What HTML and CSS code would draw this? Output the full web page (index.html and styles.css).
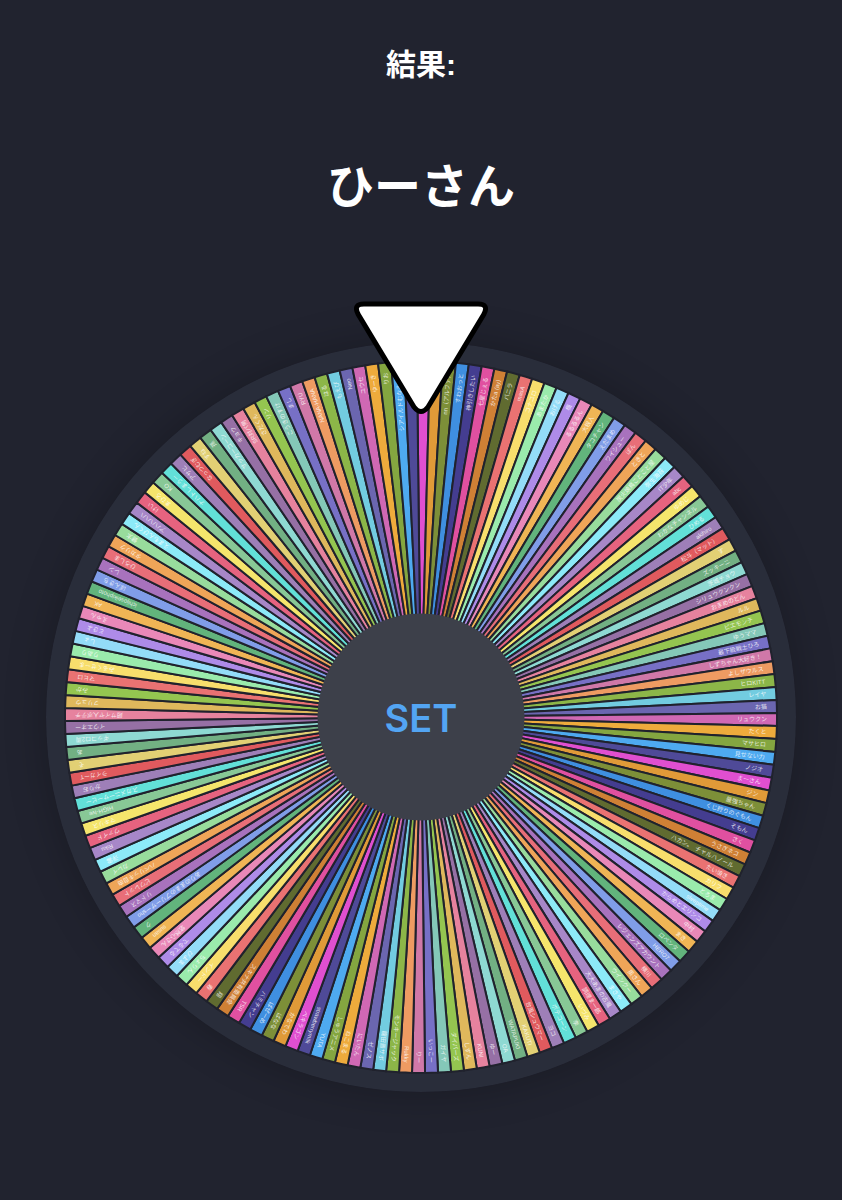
FILE: index.html
```
<!DOCTYPE html>
<html lang="ja">
<head>
<meta charset="UTF-8">
<meta name="viewport" content="width=device-width, initial-scale=1">
<title>ルーレット</title>
<link rel="stylesheet" href="styles.css">
</head>
<body>
	<main class="roulette">
		<h1 class="label">結果:</h1>
		<p class="result">ひーさん</p>
		<div class="wheel">
			<svg class="disc" viewBox="0 0 750 750">
				<circle class="ring" cx="375" cy="375" r="375" />
				<g id="slices"></g>
			</svg>
			<svg class="pointer" viewBox="0 0 134 114">
				<path d="M10 3H124Q135 3 130 13L74 106Q67 115 60 106L4 13Q-1 3 10 3Z" />
			</svg>
			<button type="button" class="set_btn">SET</button>
		</div>
	</main>
	<script src="script.js"></script>
</body>
</html>
```
FILE: styles.css
```
* {
	box-sizing: border-box;
}

body {
	margin: 0;
	min-height: 100vh;
	background: #21232f;
	color: #fff;
	font-family: "Liberation Sans", "Noto Sans CJK JP", sans-serif;
}

.roulette {
	padding: 41px 46px;
	text-align: center;
}

.label {
	margin: 0;
	font-size: 30px;
	line-height: 48px;
}

.result {
	margin: 64px 0 0;
	font-size: 47px;
	font-weight: bold;
	line-height: 68px;
}

.wheel {
	position: relative;
	margin-top: 121px;
}

.disc {
	display: block;
	width: 100%;
	border-radius: 50%;
	box-shadow: 0 0 40px rgba(0, 0, 0, 0.25);
}

.ring {
	fill: #292d3a;
}

.slice {
	stroke: #20222d;
	stroke-width: 2px;
}

.name {
	fill: #fff;
	fill-opacity: 0.8;
	font-size: 6px;
	text-anchor: end;
}

/* 針 */
.pointer {
	position: absolute;
	top: -41px;
	left: 50%;
	width: 134px;
	transform: translateX(-50%);
}

.pointer path {
	fill: #fff;
	stroke: #000;
	stroke-width: 5px;
}

.set_btn {
	position: absolute;
	top: 50%;
	left: 50%;
	width: 27.6%;
	aspect-ratio: 1;
	padding: 0;
	transform: translate(-50%, -50%);
	border: none;
	border-radius: 50%;
	background: #3d404a;
	color: #53a5f3;
	font-family: Inter, "Liberation Sans", sans-serif;
	font-size: 38px;
	font-weight: 600;
	cursor: pointer;
}
```
FILE: script.js
```
var colors = [
	'#e04fd0', '#e09a38', '#7d8f38', '#3f8fe0', '#443d90', '#e050a0', '#cf8035', '#606b30',
	'#ea7272', '#f8de6c', '#9aebac', '#93dcf8', '#ae8be8', '#e988b8', '#f0b555', '#62b47c',
	'#809de8', '#a872bd', '#e86e78', '#efa558', '#98dc9c', '#8ceaf8', '#a787c8', '#e6637f',
	'#f5e56c', '#88c896', '#62e0d8', '#9e7fb8', '#e05a5e', '#e2d074', '#72b083', '#8ed9d2',
	'#9670a5', '#e6829e', '#dfb85c', '#94c550', '#84c8b8', '#7770c6', '#d078a8', '#ee9b62',
	'#8cb648', '#72cce0', '#6b66b0', '#d068b4', '#eeab3c', '#84a640', '#4eaaf0', '#4f4a98'
];

// 上から時計回り
var names = [
	'ひーさん', 'コウヘイ', 'nn（アルファ）', 'すわおっと', '神引きしたい', '七星じぇる', 'かたa (ay)', 'バニラ',
	'masA', 'コナユロ', 'あまたか', 'おげる', '楓', 'るるるるん', '大根人', 'タコチャン',
	'えだまめ', 'ワイシュー', 'ぽん', 'ときと', '炭火焼鳥ことこと屋', '弥生海苔', 'IT少年', 'abc',
	'ゆめじ', 'わかなチャンネル', 'ひめる', 'akihiro', '松斗（マット）', 'す', 'ズッキーニ', '茨城チョウ',
	'シリュウクンクン', 'おまめのどん', 'ルル', 'ピエモンテ', 'ゆうママ', '最下級戦士ひろ', 'しずちゃん大好き！', 'よしザウルス',
	'ヒロKITT', 'レイヤ', 'お猫', 'リュウクン', 'たくと', 'マサヒロ', '見せない力', 'ノジオ',
	'まーさん', 'ジン', '最強ちゃん', 'くじ狩りのぐもん', 'そもん', 'さく', 'うさぎネコ', 'ハカン。　チャルハノール',
	'たい焼き', 'カリフ', 'とろま', 'sleeptime', 'からめとエリンコ', '中村', 'まき', 'ロペンタ',
	'HERO7', 'レジェンズアカウント', '横川', '奥さん', 'ウインクー', 'まさや', '大大あまの古風', '調理ま一郎',
	'いづみ', '李', 'ポテコーン', 'ヨコ', '台風シュウマー', 'KAKUTI', 'WATAPUKI', 'OA',
	'ゆー', 'KUNI', 'しずん', 'ダイバーズ', 'ガイヤ', 'いっこー', 'りー', 'Rukky',
	'モンキージャック', '龍田晋サボ', 'ゼノス', 'にいたん', 'ねこまる', 'しゅうアニメ', 'YUTA', 'strawberrymilk',
	'ペキラゴン', 'かなでわ', 'ばなな', 'ぱぜーめ', 'バミチャン', 'TSR', 'スキナ共有委員会', '翔',
	'寿', 'インドー', 'ちょりん', 'ぴよま', 'でるてる', '悠然心さん', 'susan', 'ク',
	'ありのままのプリーザーsho', 'リドマス', 'ビワレット', 'ハベリッキ自由', 'カレイ', '浮雲', 'Riku', 'ヴァイド',
	'マキリス', 'HIGH-Ive', 'スガメニーサービー', 'かりお', 'ライガーT', 'そ', 'あ', 'ギッコロ2周',
	'イウエオー', '超サイヤ人ポテチ', 'フリュウ', 'みか', 'マヒロ', 'みるくせーま', 'りあり', 'しょ',
	'ときよ', 'えゃん', 'AK', 'ichijoseikiphoto', 'ぽんきち', 'レン', 'ひろしま', 'タカリク',
	'健太', 'えまもんぴくん', 'アハハハハ', 'けい', 'まひろ', 'KO', 'ナハトしまうー', 'アサヒ',
	'なっつむぎ', 'すね', '孫', 'サッカーコーン', 'キョウ', 'SR対パ男', 'さだくん', 'リン',
	'こうきのすけ', 'まし', 'RYU', 'NANA-HANA', 'はる', 'もえぴ', 'Neo', 'ユウセ',
	'ゆーき', 'りお', 'シアイルドむなみ鷹司', 'しの'
];

var NS = 'http://www.w3.org/2000/svg';
var center = 375;
var radius = 356;
var textEnd = 346;
var step = 360 / names.length;
var stopAngle = 0.4; // 止まった位置のずれ
var slices = document.getElementById('slices');

// 最後の40個は末尾の色に揃える
function colorOf(i) {
	var rest = names.length - i;
	if (rest <= 40) {
		return colors[colors.length - rest];
	}
	return colors[i % colors.length];
}

function point(deg) {
	var rad = deg * Math.PI / 180;
	return (center + radius * Math.cos(rad)) + ' ' + (center + radius * Math.sin(rad));
}

for (var i = 0; i < names.length; i++) {
	var deg = i * step - 90 + stopAngle;

	var path = document.createElementNS(NS, 'path');
	path.setAttribute('class', 'slice');
	path.setAttribute('fill', colorOf(i));
	path.setAttribute('d', 'M' + center + ' ' + center + 'L' + point(deg - step / 2)
		+ 'A' + radius + ' ' + radius + ' 0 0 1 ' + point(deg + step / 2) + 'Z');
	slices.appendChild(path);

	var text = document.createElementNS(NS, 'text');
	text.setAttribute('class', 'name');
	text.setAttribute('x', center + textEnd);
	text.setAttribute('y', center + 2);
	text.setAttribute('transform', 'rotate(' + deg + ' ' + center + ' ' + center + ')');
	text.textContent = names[i];
	slices.appendChild(text);
}
```
